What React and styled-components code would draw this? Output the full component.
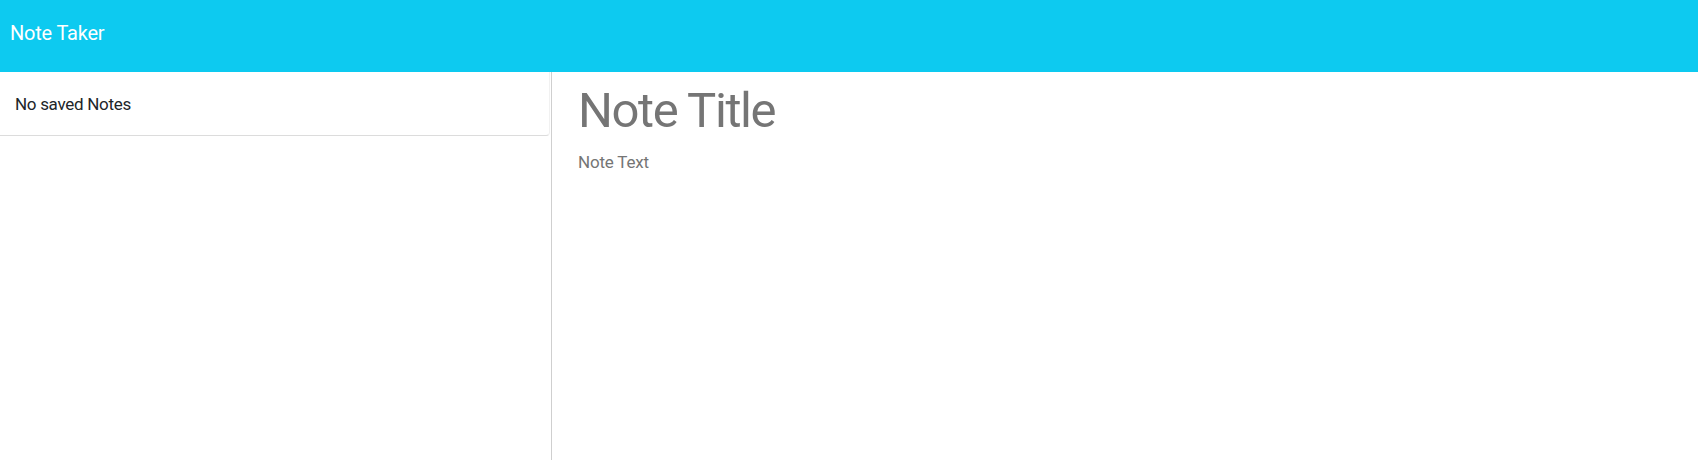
import React from 'react';
import styled, { createGlobalStyle } from 'styled-components';

const GlobalStyle = createGlobalStyle`
  html, body {
    margin: 0;
    padding: 0;
    height: 100%;
  }

  body {
    font-family: Roboto, "Noto Sans", "Liberation Sans", sans-serif;
    background: #fff;
  }

  #root {
    min-height: 100vh;
    display: flex;
    flex-direction: column;
  }
`;

const Navbar = styled.nav`
  box-sizing: border-box;
  height: 72px;
  padding: 21px 10px 0;
  background: #0dcaf0;

  .brand {
    font-size: 20px;
    line-height: 24px;
    letter-spacing: -0.2px;
    color: #fff;
  }
`;

const Layout = styled.div`
  flex: 1;
  display: grid;
  grid-template-columns: 551px 1fr;
`;

const Sidebar = styled.div`
  display: flex;
  flex-direction: column;
`;

const ListItem = styled.div`
  box-sizing: border-box;
  width: 550px;
  padding: 20px 15px 19px;
  font-size: 17px;
  line-height: 24px;
  letter-spacing: -0.3px;
  color: #212529;
  border-bottom: 1px solid #dcdcdc;
  border-right: 1px solid #f1f1f1;
  border-bottom-right-radius: 4px;
`;

const Editor = styled.div`
  display: flex;
  flex-direction: column;
  gap: 10px;
  padding: 10px 26px 0;
  border-left: 1px solid #cfcfcf;
`;

const Field = styled.input`
  box-sizing: border-box;
  width: 100%;
  height: ${p => p.$height}px;
  padding: 0;
  border: none;
  outline: none;
  background: transparent;
  font-family: inherit;
  font-size: ${p => p.$size}px;
  line-height: ${p => p.$height}px;
  letter-spacing: ${p => p.$spacing}px;
  color: #757575;

  &::placeholder {
    color: #757575;
    opacity: 1;
  }
`;

export default function App() {
  return (
    <>
      <GlobalStyle />
      <Navbar>
        <span className='brand'>Note Taker</span>
      </Navbar>
      <Layout>
        <Sidebar>
          <ListItem>No saved Notes</ListItem>
        </Sidebar>
        <Editor>
          <Field $size={49} $height={58} $spacing={-1.4} placeholder='Note Title' />
          <Field $size={17} $height={24} $spacing={-0.2} placeholder='Note Text' />
        </Editor>
      </Layout>
    </>
  );
}
